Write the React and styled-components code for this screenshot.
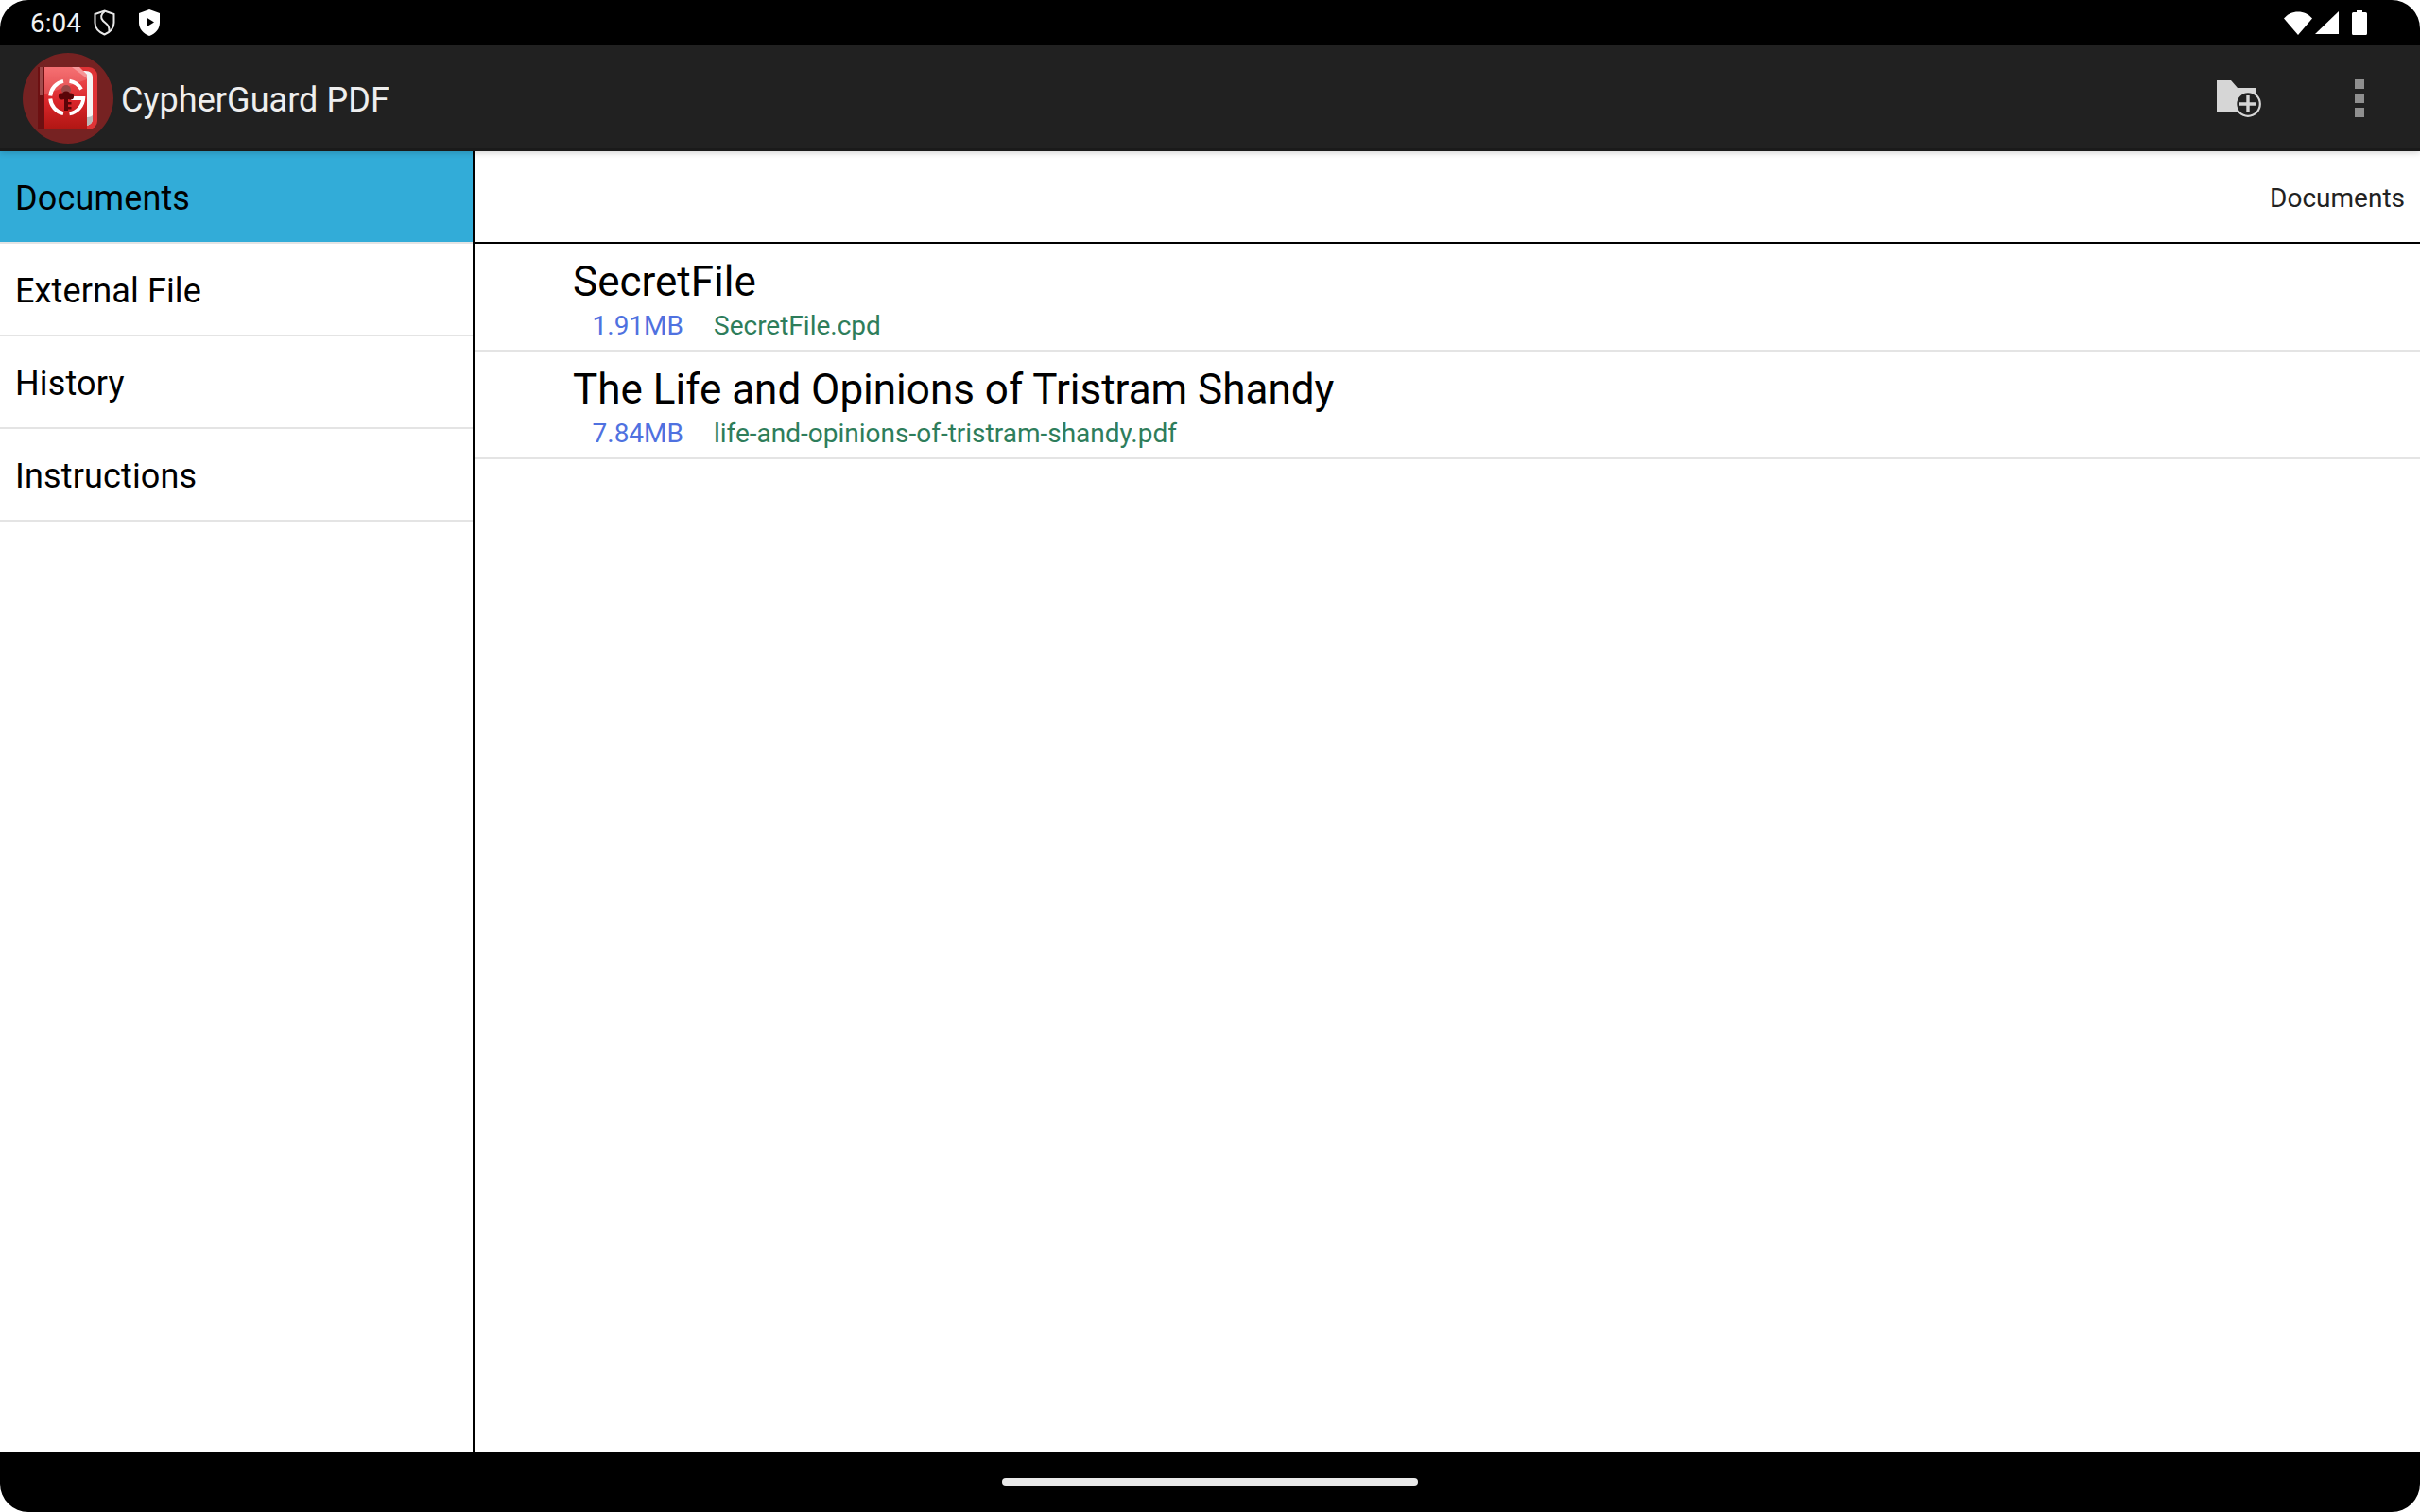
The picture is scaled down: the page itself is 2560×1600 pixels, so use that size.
import React from "react";
import styled, { createGlobalStyle } from "styled-components";

const GlobalStyle = createGlobalStyle`
  html, body {
    margin: 0;
    padding: 0;
    background: #fff;
  }
  * {
    box-sizing: border-box;
  }
`;

const Screen = styled.div`
  width: 2560px;
  height: 1600px;
  display: flex;
  flex-direction: column;
  overflow: hidden;
  border-radius: 30px;
  background: #fff;
  font-family: Roboto, "Liberation Sans", sans-serif;
`;

const StatusBar = styled.div`
  height: 48px;
  flex: none;
  display: flex;
  align-items: center;
  background: #000;
  padding: 0 56px 0 32px;
  color: #fff;
`;

const Clock = styled.span`
  font-size: 28px;
  color: #f2f2f2;
  margin-right: 13px;
`;

const StatusIcon = styled.svg`
  display: block;
  flex: none;
  margin-left: ${(p) => p.$gap || 0}px;
`;

const StatusRight = styled.div`
  margin-left: auto;
  display: flex;
  align-items: center;
`;

const AppBar = styled.div`
  height: 112px;
  flex: none;
  position: relative;
  z-index: 2;
  display: flex;
  align-items: center;
  padding: 3px 59px 0 24px;
  background: #212121;
  border-bottom: 3px solid #1a1a1a;
  box-shadow: 0 2px 6px rgba(0, 0, 0, 0.16);
`;

const AppTitle = styled.div`
  font-size: 36px;
  letter-spacing: 0.05px;
  color: #eeeeee;
  margin: 4px 0 0 8px;
`;

const AppActions = styled.div`
  margin-left: auto;
  display: flex;
  align-items: center;
  gap: 99px;
`;

const MenuDots = styled.div`
  display: flex;
  flex-direction: column;
  gap: 5px;
`;

const MenuDot = styled.span`
  display: block;
  width: 10px;
  height: 10px;
  background: #8f8f8f;
`;

const Main = styled.div`
  flex: 1;
  display: flex;
  min-height: 0;
`;

const Sidebar = styled.div`
  width: 502px;
  flex: none;
  border-right: 2px solid #000;
`;

const NavItem = styled.div`
  height: 98px;
  display: flex;
  align-items: center;
  padding: 4px 16px 0;
  font-size: 36px;
  letter-spacing: 0.15px;
  color: #000;
  background: ${(p) => (p.$active ? "#32acd8" : "#fff")};
  border-bottom: 2px solid #e4e4e4;
`;

const Content = styled.div`
  flex: 1;
  min-width: 0;
`;

const CrumbBar = styled.div`
  height: 98px;
  display: flex;
  align-items: center;
  justify-content: flex-end;
  padding: 3px 16px 0;
  font-size: 28px;
  color: #222;
  border-bottom: 2px solid #000;
`;

const FileRow = styled.div`
  height: 114px;
  padding: 14px 0 0 104px;
  border-bottom: 2px solid #e4e4e4;
`;

const FileTitle = styled.div`
  font-size: 44px;
  line-height: 52px;
  color: #000;
`;

const FileMeta = styled.div`
  display: flex;
  font-size: 28px;
  line-height: 34px;
  margin-top: 4px;
`;

const FileSize = styled.span`
  width: 117px;
  text-align: right;
  color: #4f71e0;
`;

const FileName = styled.span`
  margin-left: 32px;
  color: #2e7d5b;
`;

const NavBar = styled.div`
  height: 64px;
  flex: none;
  display: flex;
  justify-content: center;
  padding-top: 28px;
  background: #000;
`;

const HomePill = styled.div`
  width: 440px;
  height: 8px;
  border-radius: 4px;
  background: #e9e9e9;
`;

function Logo() {
  return (
    <svg width="96" height="96" viewBox="0 0 96 96" style={{ flex: "none" }}>
      <defs>
        <linearGradient id="cover" x1="0" y1="0" x2="0" y2="1">
          <stop offset="0" stopColor="#f4595c" />
          <stop offset="0.55" stopColor="#d9262a" />
          <stop offset="1" stopColor="#b01613" />
        </linearGradient>
      </defs>
      <circle cx="48" cy="48" r="48" fill="#762222" />
      <path d="M60 15h10a9 9 0 0 1 9 9v48a9 9 0 0 1-9 9H60z" fill="#df3336" />
      <path d="M66 19c6 0 8 3 8 7v44c0 4-3 7-8 7l-3 0V19z" fill="#f4f4f4" />
      <path d="M66 68c3 0 6 0 8-2v4c0 4-3 7-8 7h-3v-9z" fill="#b9b9b9" />
      <rect x="16" y="15" width="7" height="66" fill="#6d1012" />
      <rect x="18" y="15" width="3" height="30" fill="#a04b4c" />
      <path d="M23 15h37l8 8v58H23z" fill="url(#cover)" />
      <path d="M23 15h37l8 8v5L23 44z" fill="#fff" opacity="0.14" />
      <path d="M52 15h8l8 8v4z" fill="#fff" opacity="0.3" />
      <g fill="none" stroke="#fff" strokeWidth="4">
        <path d="M29.26 45.5A17.5 17.5 0 0 1 43 29.9" />
        <path d="M49.5 29.7A17.5 17.5 0 0 1 62 38.5" />
        <path d="M51 48H64.2A17.5 17.5 0 0 1 49.5 64.3" />
        <path d="M43 64.1A17.5 17.5 0 0 1 29.26 48.5" />
      </g>
      <circle cx="46" cy="39" r="5" fill="#9a4a4a" />
      <g fill="#5a0508">
        <circle cx="41.5" cy="46" r="3.6" />
        <circle cx="50.500" cy="46" r="3.6" />
        <circle cx="46" cy="44.500" r="4" />
        <rect x="44" y="46" width="4" height="15" />
        <rect x="48" y="52" width="3.500" height="2.500" />
        <rect x="48" y="57" width="3.500" height="2.500" />
      </g>
    </svg>
  );
}

function FolderAdd() {
  return (
    <svg width="47" height="40" viewBox="0 0 47 40" style={{ display: "block" }}>
      <path d="M0 1h15l7 8h20v18a15 15 0 0 0-13 7H0z" fill="#d6d6d6" />
      <circle cx="33" cy="26" r="12.8" fill="#212121" stroke="#d6d6d6" strokeWidth="2.2" />
      <path d="M33 17v18M24 26h18" stroke="#d6d6d6" strokeWidth="3.4" fill="none" />
    </svg>
  );
}

const files = [
  { title: "SecretFile", size: "1.91MB", name: "SecretFile.cpd" },
  {
    title: "The Life and Opinions of Tristram Shandy",
    size: "7.84MB",
    name: "life-and-opinions-of-tristram-shandy.pdf",
  },
];

const navItems = ["Documents", "External File", "History", "Instructions"];

export default function App() {
  return (
    <Screen>
      <GlobalStyle />
      <StatusBar>
        <Clock>6:04</Clock>
        <StatusIcon width="23" height="28" viewBox="0 0 23 28">
          <path d="M11.500 1.500 21.500 5v9c0 5.500-4 10-10 12.500C5.500 24 1.500 19.500 1.500 14V5z" fill="none" stroke="#e8e8e8" strokeWidth="2" />
          <path d="M12 2C7.500 5 7 9 10 12c3 3 7 4.500 6.500 11" fill="none" stroke="#e8e8e8" strokeWidth="2" />
        </StatusIcon>
        <StatusIcon $gap={25} width="22" height="28" viewBox="0 0 22 28">
          <path d="M11 0 22 4v10c0 6.500-4.500 11.500-11 14C4.500 25.500 0 20.500 0 14V4z" fill="#fff" />
          <path d="M8 8.500v10l8-5z" fill="#000" />
        </StatusIcon>
        <StatusRight>
          <StatusIcon width="30" height="25" viewBox="0 0 30 25">
            <path d="M0 7.500C4 3 9 0.500 15 0.500S26 3 30 7.500L15 25z" fill="#fff" />
          </StatusIcon>
          <StatusIcon $gap={3} width="25" height="24" viewBox="0 0 25 24">
            <path d="M25 0v24H0z" fill="#fff" />
          </StatusIcon>
          <StatusIcon $gap={14} width="16" height="26" viewBox="0 0 16 26">
            <path d="M5 0h6v2h3.500A1.500 1.500 0 0 1 16 3.500v21a1.500 1.500 0 0 1-1.500 1.500h-13A1.500 1.500 0 0 1 0 24.500v-21A1.500 1.500 0 0 1 1.500 2H5z" fill="#fff" />
          </StatusIcon>
        </StatusRight>
      </StatusBar>
      <AppBar>
        <Logo />
        <AppTitle>CypherGuard PDF</AppTitle>
        <AppActions>
          <FolderAdd />
          <MenuDots>
            <MenuDot />
            <MenuDot />
            <MenuDot />
          </MenuDots>
        </AppActions>
      </AppBar>
      <Main>
        <Sidebar>
          {navItems.map((item, i) => (
            <NavItem key={item} $active={i === 0}>
              {item}
            </NavItem>
          ))}
        </Sidebar>
        <Content>
          <CrumbBar>Documents</CrumbBar>
          {files.map((f) => (
            <FileRow key={f.name}>
              <FileTitle>{f.title}</FileTitle>
              <FileMeta>
                <FileSize>{f.size}</FileSize>
                <FileName>{f.name}</FileName>
              </FileMeta>
            </FileRow>
          ))}
        </Content>
      </Main>
      <NavBar>
        <HomePill />
      </NavBar>
    </Screen>
  );
}
